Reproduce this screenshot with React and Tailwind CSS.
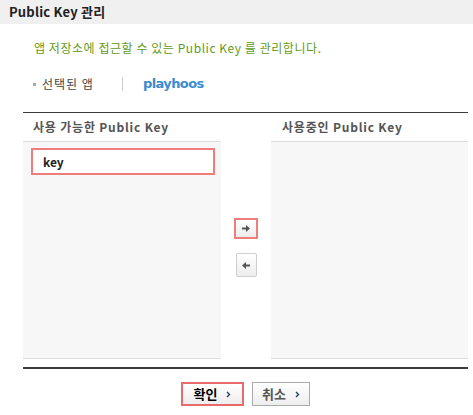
import React from 'react';

const ArrowRight = () => (
  <svg width="8" height="7" viewBox="0 0 8 7">
    <path d="M0 2.5h4V0l4 3.5L4 7V4.5H0z" fill="#555" />
  </svg>
);

const ArrowLeft = () => (
  <svg width="8" height="7" viewBox="0 0 8 7">
    <path d="M8 2.5H4V0L0 3.5 4 7V4.5h4z" fill="#555" />
  </svg>
);

const Chevron = () => (
  <svg width="5" height="7" viewBox="0 0 5 7" className="ml-[9px]">
    <path d="M1 1l2.5 2.5L1 6" fill="none" stroke="#2b3f66" strokeWidth="1.4" />
  </svg>
);

export default function App() {
  return (
    <div className="w-[473px] h-[415px] bg-white font-['Noto_Sans_CJK_KR','Noto_Sans',sans-serif] overflow-hidden">
      {/* Title bar */}
      <div className="h-[24px] bg-[#f0f0f0] flex items-center pl-[9px] text-[13px] font-bold text-[#222] tracking-[0.2px]">
        Public Key 관리
      </div>

      <div className="pl-[23px] pr-[5px]">
        <p className="mt-[15px] pl-[11px] h-[18px] leading-[18px] text-[12px] text-[#5f9a1c] tracking-[0.55px]">
          앱 저장소에 접근할 수 있는 Public Key 를 관리합니다.
        </p>

        {/* Selected app */}
        <div className="mt-[19px] h-[16px] flex items-center pl-[10px] text-[12px]">
          <span className="w-[3px] h-[3px] bg-[#aaa] mr-[6px]" />
          <span className="text-[#444] w-[80px] tracking-[1px]">선택된 앱</span>
          <span className="w-px h-[14px] bg-[#ccc]" />
          <span className="ml-[20px] font-bold text-[13px] text-[#3b8bd0] font-['DejaVu_Sans',sans-serif] tracking-[-0.6px]">
            playhoos
          </span>
        </div>

        {/* Key panels */}
        <div className="mt-[20px] border-t border-[#3c3c3c] flex">
          <div className="w-[198px]">
            <div className="h-[28px] flex items-center pl-[10px] text-[12px] font-bold text-[#555] tracking-[0.8px]">
              사용 가능한 Public Key
            </div>
            <div className="h-[218px] bg-[#f7f7f7] border-t border-b border-[#dcdcdc] pt-[6px] pl-[8px] pr-[6px]">
              <div className="h-[27px] border-2 border-[#f07c7c] bg-white flex items-center pl-[10px] text-[12px] font-bold text-[#222]">
                key
              </div>
            </div>
          </div>

          <div className="w-[50px] flex flex-col items-center pt-[105px] gap-[14px]">
            <button className="w-[24px] h-[21px] border-2 border-[#f07c7c] bg-gradient-to-b from-white to-[#ececec] flex items-center justify-center">
              <ArrowRight />
            </button>
            <button className="w-[21px] h-[24px] border border-[#cfcfcf] rounded-[2px] bg-gradient-to-b from-white to-[#ececec] flex items-center justify-center">
              <ArrowLeft />
            </button>
          </div>

          <div className="flex-1">
            <div className="h-[28px] flex items-center pl-[11px] text-[12px] font-bold text-[#555] tracking-[0.8px]">
              사용중인 Public Key
            </div>
            <div className="h-[218px] bg-[#f7f7f7] border-t border-b border-[#dcdcdc]" />
          </div>
        </div>

        <div className="mt-[8px] border-t-2 border-[#3c3c3c]" />

        {/* Actions */}
        <div className="mt-[13px] flex justify-center gap-[8px]">
          <button className="w-[63px] h-[24px] border-2 border-[#e96a6a] bg-gradient-to-b from-white to-[#eeeeee] flex items-center justify-center text-[13px] font-bold text-black">
            확인
            <Chevron />
          </button>
          <button className="w-[58px] h-[24px] border border-[#aaaaaa] bg-gradient-to-b from-white to-[#eeeeee] flex items-center justify-center text-[13px] font-bold text-[#555]">
            취소
            <Chevron />
          </button>
        </div>
      </div>
    </div>
  );
}
